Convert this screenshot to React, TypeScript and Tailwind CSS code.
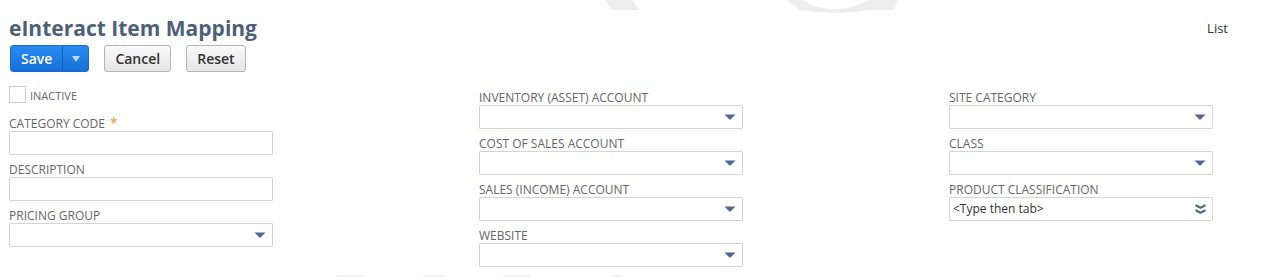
import React from "react";

const LABEL = "block text-[12px] leading-[14px] uppercase text-[#666666] whitespace-nowrap";
const BOX = "w-[264px] h-[24px] border border-[#d5d5d5] bg-white rounded-[1px]";
const BTN_GRAY =
  "h-[27px] px-[10px] rounded-[3px] border border-[#b5b5b5] bg-gradient-to-b from-[#fafafa] to-[#e5e5e5] text-[14px] font-semibold text-[#333333]";

function Caret() {
  return (
    <svg width="12" height="6" viewBox="0 0 12 6" className="shrink-0">
      <path d="M0.5 0.5 H11.5 L6.8 5.3 Q6 6 5.2 5.3 Z" fill="#4f6a92" />
    </svg>
  );
}

function DoubleChevron() {
  return (
    <svg width="11" height="10" viewBox="0 0 11 10" className="shrink-0">
      <path d="M0.5 0 L5.5 2.6 L10.5 0 V2.6 L5.5 5 L0.5 2.6 Z" fill="#4f6a92" />
      <path d="M0.5 5 L5.5 7.6 L10.5 5 V7.6 L5.5 10 L0.5 7.6 Z" fill="#4f6a92" />
    </svg>
  );
}

function Field({ label, required }: { label: string; required?: boolean }) {
  return (
    <div>
      <label className={LABEL}>
        {label}
        {required && <span className="text-[#e69a28] ml-[5px] text-[14px]">*</span>}
      </label>
      <div className={BOX} />
    </div>
  );
}

function SelectField({ label, placeholder, multi }: { label: string; placeholder?: string; multi?: boolean }) {
  return (
    <div>
      <label className={LABEL}>{label}</label>
      <div className={`${BOX} flex items-center justify-between pl-[3px] pr-[6px]`}>
        <span className="text-[12px] text-[#333333]">{placeholder}</span>
        {multi ? <DoubleChevron /> : <Caret />}
      </div>
    </div>
  );
}

export default function App() {
  return (
    <div className="relative w-[1267px] h-[277px] bg-white overflow-hidden" style={{ fontFamily: '"Open Sans", sans-serif' }}>
      {/* faint watermark */}
      <svg className="absolute inset-0 pointer-events-none" width="1267" height="277">
        <path d="M605 0 H632 L640 10 H612 Z" fill="#eeeeee" />
        <path d="M786 0 H801 Q835 18 868 0 H898 L894 10 H870 Q836 16 800 10 Z" fill="#eeeeee" />
        <rect x="337" y="275" width="26" height="2" fill="#f0f0f0" />
        <rect x="423" y="275" width="22" height="2" fill="#f0f0f0" />
        <rect x="503" y="275" width="27" height="2" fill="#f0f0f0" />
        <rect x="613" y="275" width="9" height="2" fill="#f0f0f0" />
      </svg>

      <div className="relative">
        <div className="flex items-start justify-between pl-[9px] pr-[39px] pt-[14px]">
          <h1 className="text-[21px] leading-[28px] font-bold text-[#4d5f79]">eInteract Item Mapping</h1>
          <span className="text-[13px] leading-[18px] mt-[5px] text-[#333333]">List</span>
        </div>

        <div className="flex items-center gap-[15px] pl-[10px] mt-[3px]">
          <div className="flex h-[27px] rounded-[3px] overflow-hidden bg-gradient-to-b from-[#2a8af0] to-[#1670d8] border border-[#1a6ccf]">
            <button className="px-[10px] text-[14px] font-semibold text-white">Save</button>
            <div className="w-px bg-[#145fb8]" />
            <button className="w-[25px] flex items-center justify-center">
              <svg width="8" height="8" viewBox="0 0 8 8">
                <path d="M0 1 H8 L4 7 Z" fill="#b9d6f8" />
              </svg>
            </button>
          </div>
          <button className={BTN_GRAY}>Cancel</button>
          <button className={BTN_GRAY}>Reset</button>
        </div>

        <div className="flex pl-[9px] mt-[14px]">
          <div className="w-[470px]">
            <div className="flex items-center h-[17px]">
              <div className="w-[17px] h-[17px] border border-[#cccccc] bg-white" />
              <span className="ml-[4px] mt-[4px] text-[11px] uppercase text-[#666666]">Inactive</span>
            </div>
            <div className="mt-[13px] flex flex-col gap-[8px]">
              <Field label="Category Code" required />
              <Field label="Description" />
              <SelectField label="Pricing Group" />
            </div>
          </div>
          <div className="w-[470px] pt-[5px] flex flex-col gap-[8px]">
            <SelectField label="Inventory (Asset) Account" />
            <SelectField label="Cost of Sales Account" />
            <SelectField label="Sales (Income) Account" />
            <SelectField label="Website" />
          </div>
          <div className="w-[300px] pt-[5px] flex flex-col gap-[8px]">
            <SelectField label="Site Category" />
            <SelectField label="Class" />
            <SelectField label="Product Classification" placeholder="<Type then tab>" multi />
          </div>
        </div>
      </div>
    </div>
  );
}
